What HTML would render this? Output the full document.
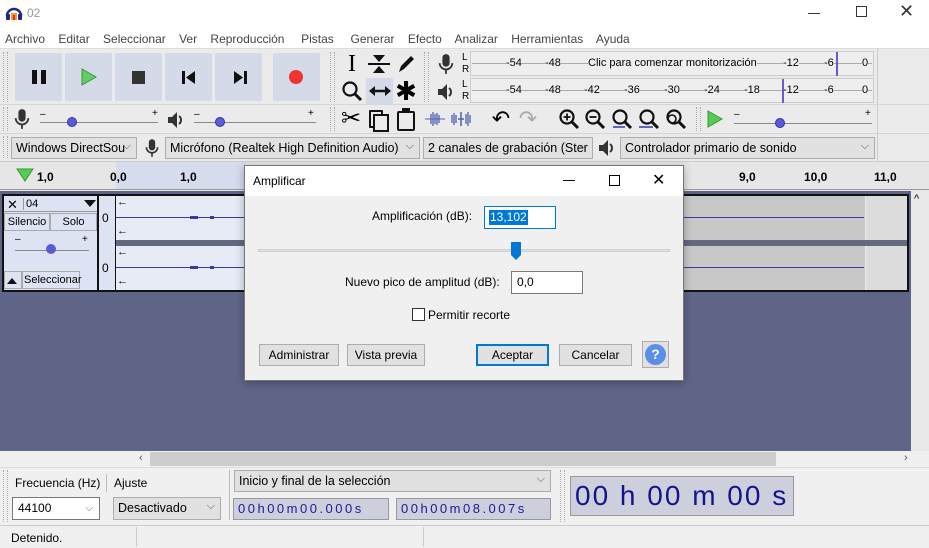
<!DOCTYPE html>
<html><head><meta charset="utf-8">
<style>
*{box-sizing:border-box;margin:0;padding:0}
body{width:929px;height:548px;overflow:hidden;position:relative;background:#f0f0f0;font-family:"Liberation Sans",sans-serif;font-size:12px;color:#000}
.a{position:absolute}
.btn{position:absolute;background:#d5dae8;border-radius:2px;top:53px;width:47px;height:48px}
.tool{position:absolute;width:26px;height:26px;font-size:20px;text-align:center;line-height:26px}
.dd{position:absolute;background:#e1e1e1;border:1px solid #adadad;height:22px;line-height:20px;padding-left:4px;font-size:12.5px;white-space:nowrap;overflow:hidden}
.dd:after{content:"⌵";position:absolute;right:5px;top:-2px;color:#555;font-size:11px}
.grip{position:absolute;width:5px;border-left:1px dotted #aaa;border-right:1px dotted #aaa}
.mt{position:absolute;font-size:11px}
.dbtn{position:absolute;top:344px;height:22px;background:#e1e1e1;border:1px solid #adadad;text-align:center;line-height:20px;font-size:12px}
.tc{color:#1a1a9a;font-family:"Liberation Sans Narrow","Liberation Sans",sans-serif}
</style></head><body>
<svg width="0" height="0" style="position:absolute"><defs>
<symbol id="mic" viewBox="0 0 20 24"><rect x="6" y="1" width="8" height="14" rx="4" fill="#333"/><path d="M3 11 a7 7 0 0 0 14 0" fill="none" stroke="#333" stroke-width="2"/><rect x="9" y="18" width="2" height="5" fill="#333"/></symbol>
<symbol id="spk" viewBox="0 0 20 20"><path d="M2 7 H6 L11 2 V18 L6 13 H2Z" fill="#333"/><path d="M13 6 a5 5 0 0 1 0 8" fill="none" stroke="#333" stroke-width="2"/></symbol>
<symbol id="mag" viewBox="0 0 22 22"><circle cx="9" cy="9" r="6.5" fill="none" stroke="#111" stroke-width="2.2"/><path d="M14 14 L20 20" stroke="#111" stroke-width="3"/></symbol>
</defs></svg>
<!-- title bar -->
<div class="a" style="left:0;top:0;width:929px;height:28px;background:#fff"></div>
<svg class="a" style="left:5px;top:5px" width="18" height="16"><path d="M2 11 A7 7 0 0 1 16 11" fill="none" stroke="#1a2a8a" stroke-width="2.5"/><rect x="1" y="9" width="4" height="6" rx="1" fill="#1a2a8a"/><rect x="13" y="9" width="4" height="6" rx="1" fill="#1a2a8a"/><rect x="6" y="8" width="6" height="7" fill="#f0a020"/><rect x="8" y="10" width="2" height="5" fill="#e03020"/></svg>
<div class="a" style="left:27px;top:6px;color:#999;font-size:12px">02</div>
<div class="a" style="left:808px;top:13px;width:12px;border-top:1px solid #333"></div>
<div class="a" style="left:856px;top:6px;width:11px;height:11px;border:1px solid #333"></div>
<div class="a" style="left:899px;top:1px;font-size:18px;color:#333">✕</div>
<!-- menu -->
<div class="a" style="left:0;top:28px;width:929px;height:20px;background:#fff"></div>
<div class="a" style="left:5px;top:32px;color:#444;font-size:12px">Archivo&nbsp;&nbsp;&nbsp; Editar&nbsp;&nbsp;&nbsp; Seleccionar&nbsp;&nbsp;&nbsp; Ver&nbsp;&nbsp;&nbsp; Reproducción&nbsp;&nbsp;&nbsp;&nbsp; Pistas&nbsp;&nbsp;&nbsp;&nbsp; Generar&nbsp;&nbsp;&nbsp; Efecto&nbsp;&nbsp;&nbsp; Analizar&nbsp;&nbsp;&nbsp; Herramientas&nbsp;&nbsp;&nbsp; Ayuda</div>
<!-- toolbar area -->
<div class="a" style="left:0;top:48px;width:929px;height:113px;background:#ebebeb;border-top:1px solid #ddd"></div>
<div class="grip" style="left:3px;top:52px;height:50px"></div>
<div class="btn" style="left:15px"></div><div class="btn" style="left:65px"></div><div class="btn" style="left:115px"></div><div class="btn" style="left:165px"></div><div class="btn" style="left:215px"></div><div class="btn" style="left:273px"></div>
<div class="a" style="left:32px;top:70px;width:5px;height:14px;background:#111"></div><div class="a" style="left:41px;top:70px;width:5px;height:14px;background:#111"></div>
<svg class="a" style="left:80px;top:68px" width="18" height="18"><path d="M2 1 L16 9 L2 17Z" fill="#6c6" stroke="#393" stroke-width="1"/></svg>
<div class="a" style="left:132px;top:71px;width:13px;height:13px;background:#333"></div>
<svg class="a" style="left:181px;top:70px" width="16" height="15"><rect x="1" y="1" width="3" height="13" fill="#111"/><path d="M14 1 L5 7.5 L14 14Z" fill="#111"/></svg>
<svg class="a" style="left:232px;top:70px" width="16" height="15"><rect x="12" y="1" width="3" height="13" fill="#111"/><path d="M2 1 L11 7.5 L2 14Z" fill="#111"/></svg>
<div class="a" style="left:289px;top:70px;width:14px;height:14px;border-radius:50%;background:#e33"></div>
<div class="grip" style="left:330px;top:52px;height:50px"></div>
<div class="tool" style="left:339px;top:51px;font-family:'Liberation Serif';font-size:24px">I</div>
<svg class="a" style="left:367px;top:53px" width="24" height="22"><path d="M1 11 H23" stroke="#111" stroke-width="2"/><path d="M6 2 H18 L12 9Z M6 20 H18 L12 13Z" fill="#111"/></svg>
<svg class="a" style="left:396px;top:53px" width="20" height="22"><path d="M3 19 L5 13 L15 3 L18 6 L8 16Z" fill="#111"/></svg>
<svg class="a" style="left:341px;top:80px" width="22" height="22"><use href="#mag"/></svg>
<div class="a" style="left:366px;top:78px;width:27px;height:26px;background:#d5dae8"></div>
<svg class="a" style="left:368px;top:84px" width="24" height="14"><path d="M5 7 H19" stroke="#111" stroke-width="2.5"/><path d="M1 7 L7 2 V12Z M23 7 L17 2 V12Z" fill="#111"/></svg>
<div class="tool" style="left:393px;top:78px;font-size:26px">✱</div>
<div class="grip" style="left:424px;top:52px;height:50px"></div>
<svg class="a" style="left:437px;top:53px" width="18" height="22"><use href="#mic"/></svg>
<svg class="a" style="left:436px;top:82px" width="20" height="20"><use href="#spk"/></svg>
<!-- meters -->
<div class="a" style="left:462px;top:52px;font-size:10px;line-height:12px">L<br>R</div>
<div class="a" style="left:462px;top:79px;font-size:10px;line-height:12px">L<br>R</div>
<div class="a" style="left:470px;top:51px;width:404px;height:25px;border:1px solid #ccc;background:#eee"></div>
<div class="a" style="left:470px;top:78px;width:404px;height:25px;border:1px solid #ccc;background:#eee"></div>
<div class="a" style="left:472px;top:63px;width:400px;border-top:1px solid #aaa"></div>
<div class="a" style="left:472px;top:90px;width:400px;border-top:1px solid #aaa"></div>
<div class="mt" style="left:506px;top:57px;background:#eee">-54</div><div class="mt" style="left:545px;top:57px;background:#eee">-48</div>
<div class="mt" style="left:588px;top:57px;background:#eee">Clic para comenzar monitorización</div>
<div class="mt" style="left:783px;top:57px;background:#eee">-12</div><div class="mt" style="left:824px;top:57px;background:#eee">-6</div><div class="mt" style="left:862px;top:57px;background:#eee">0</div>
<div class="mt" style="left:506px;top:84px;background:#eee">-54</div><div class="mt" style="left:545px;top:84px;background:#eee">-48</div><div class="mt" style="left:584px;top:84px;background:#eee">-42</div><div class="mt" style="left:624px;top:84px;background:#eee">-36</div><div class="mt" style="left:664px;top:84px;background:#eee">-30</div><div class="mt" style="left:704px;top:84px;background:#eee">-24</div><div class="mt" style="left:744px;top:84px;background:#eee">-18</div><div class="mt" style="left:783px;top:84px;background:#eee">-12</div><div class="mt" style="left:824px;top:84px;background:#eee">-6</div><div class="mt" style="left:862px;top:84px;background:#eee">0</div>
<div class="a" style="left:836px;top:52px;width:2px;height:24px;background:#6a5acd"></div>
<div class="a" style="left:782px;top:79px;width:2px;height:24px;background:#6a5acd"></div>
<div class="a" style="left:877px;top:48px;width:1px;height:113px;background:#ccc"></div>
<!-- row 3 -->
<div class="a" style="left:0;top:104px;width:929px;border-top:1px solid #d6d6d6"></div>
<div class="grip" style="left:3px;top:107px;height:24px"></div>
<svg class="a" style="left:13px;top:108px" width="18" height="22"><use href="#mic"/></svg>
<div class="a" style="left:40px;top:109px;font-size:10px">–</div><div class="a" style="left:152px;top:108px;font-size:10px">+</div>
<div class="a" style="left:40px;top:122px;width:118px;border-top:1px solid #888"></div>
<div class="a" style="left:67px;top:117px;width:10px;height:10px;border-radius:50%;background:#5b5bd6;border:1px solid #33a"></div>
<svg class="a" style="left:166px;top:110px" width="20" height="20"><use href="#spk"/></svg>
<div class="a" style="left:194px;top:109px;font-size:10px">–</div><div class="a" style="left:308px;top:108px;font-size:10px">+</div>
<div class="a" style="left:194px;top:122px;width:122px;border-top:1px solid #888"></div>
<div class="a" style="left:215px;top:117px;width:10px;height:10px;border-radius:50%;background:#5b5bd6;border:1px solid #33a"></div>
<div class="grip" style="left:330px;top:107px;height:24px"></div>
<div class="tool" style="left:338px;top:106px;font-size:24px">✂</div>
<div class="a" style="left:369px;top:110px;width:14px;height:18px;border:2.5px solid #111;border-radius:1px"></div><div class="a" style="left:373px;top:114px;width:16px;height:18px;border:2.5px solid #111;background:#ebebeb"></div>
<div class="a" style="left:397px;top:111px;width:18px;height:20px;border:2.5px solid #111;border-radius:2px"></div><div class="a" style="left:402px;top:108px;width:8px;height:5px;background:#111"></div>
<svg class="a" style="left:424px;top:110px" width="22" height="18"><path d="M1 9 H21" stroke="#5060b0"/><path d="M7 4 V14 M9 2 V16 M11 4 V14 M13 3 V15 M15 5 V13" stroke="#5060b0" stroke-width="1.3"/></svg>
<svg class="a" style="left:450px;top:110px" width="22" height="18"><path d="M2 5 V13 M4 3 V15 M6 5 V13 M16 4 V14 M18 2 V16 M20 5 V13" stroke="#5060b0" stroke-width="1.3"/><path d="M11 2 V16 M8 9 H14" stroke="#5060b0" stroke-width="1.5"/></svg>
<div class="tool" style="left:488px;top:106px;font-size:22px">↶</div>
<div class="tool" style="left:515px;top:106px;font-size:22px;color:#aaa">↷</div>
<svg class="a" style="left:558px;top:108px" width="22" height="22"><use href="#mag"/><path d="M5.5 9 H12.5 M9 5.5 V12.5" stroke="#111" stroke-width="1.8"/></svg>
<svg class="a" style="left:584px;top:108px" width="22" height="22"><use href="#mag"/><path d="M5.5 9 H12.5" stroke="#111" stroke-width="1.8"/></svg>
<svg class="a" style="left:611px;top:108px" width="22" height="22"><use href="#mag"/><path d="M2 19 H14" stroke="#2a3ab0" stroke-width="1.5"/></svg>
<svg class="a" style="left:638px;top:108px" width="22" height="22"><use href="#mag"/><path d="M1 19 H15" stroke="#2a3ab0" stroke-width="1.5"/></svg>
<svg class="a" style="left:665px;top:108px" width="22" height="22"><use href="#mag"/><circle cx="7" cy="11" r="4" fill="none" stroke="#111" stroke-width="1.6"/></svg>
<div class="grip" style="left:696px;top:107px;height:24px"></div>
<svg class="a" style="left:706px;top:110px" width="18" height="18"><path d="M2 1 L16 9 L2 17Z" fill="#5c5" stroke="#393"/></svg>
<div class="a" style="left:734px;top:109px;font-size:10px">–</div><div class="a" style="left:865px;top:108px;font-size:10px">+</div>
<div class="a" style="left:734px;top:123px;width:138px;border-top:1px solid #888"></div>
<div class="a" style="left:775px;top:118px;width:10px;height:10px;border-radius:50%;background:#5b5bd6;border:1px solid #33a"></div>
<!-- row 4 -->
<div class="a" style="left:0;top:133px;width:929px;border-top:1px solid #d6d6d6"></div>
<div class="grip" style="left:3px;top:136px;height:22px"></div>
<div class="dd" style="left:11px;top:137px;width:126px">Windows DirectSou</div>
<svg class="a" style="left:144px;top:137px" width="16" height="22"><use href="#mic"/></svg>
<div class="dd" style="left:165px;top:137px;width:255px">Micrófono (Realtek High Definition Audio)</div>
<div class="dd" style="left:423px;top:137px;width:170px">2 canales de grabación (Ster</div>
<svg class="a" style="left:597px;top:138px" width="20" height="20"><use href="#spk"/></svg>
<div class="dd" style="left:620px;top:137px;width:255px">Controlador primario de sonido</div>
<!-- ruler -->
<div class="a" style="left:0;top:161px;width:929px;height:30px;background:#e6e6e6;border-top:1px solid #ccc"></div>
<div class="a" style="left:116px;top:162px;width:130px;height:28px;background:#d4dced"></div>
<svg class="a" style="left:15px;top:167px" width="20" height="16"><path d="M2 2 L18 2 L10 14Z" fill="#5c5" stroke="#393"/></svg>
<div class="a" style="left:37px;top:170px;font-weight:bold;font-size:12px">1,0</div>
<div class="a" style="left:110px;top:170px;font-weight:bold;font-size:12px">0,0</div>
<div class="a" style="left:180px;top:170px;font-weight:bold;font-size:12px">1,0</div>
<div class="a" style="left:739px;top:170px;font-weight:bold;font-size:12px">9,0</div>
<div class="a" style="left:804px;top:170px;font-weight:bold;font-size:12px">10,0</div>
<div class="a" style="left:874px;top:170px;font-weight:bold;font-size:12px">11,0</div>
<div class="a" style="left:0;top:189px;width:929px;border-top:1px solid #999"></div>
<!-- tracks area -->
<div class="a" style="left:0;top:191px;width:911px;height:260px;background:#5f6587"></div>
<div class="a" style="left:911px;top:191px;width:18px;height:260px;background:#e8e8e8"></div>
<div class="a" style="left:914px;top:193px;font-size:11px">^</div>
<div class="a" style="left:2px;top:194px;width:907px;height:98px;background:#111"></div>
<div class="a" style="left:4px;top:196px;width:93px;height:94px;background:#dde3f3"></div>
<div class="a" style="left:4px;top:196px;width:93px;height:16px;border-bottom:1px solid #999"></div>
<div class="a" style="left:7px;top:197px;font-size:13px">✕</div>
<div class="a" style="left:23px;top:198px;font-size:11px;border-left:1px solid #999;padding-left:2px">04</div>
<div class="a" style="left:84px;top:200px;border:6px solid transparent;border-top:7px solid #111"></div>
<div class="a" style="left:4px;top:213px;width:46px;height:18px;border:1px solid #aaa;font-size:11px;line-height:16px;text-align:center">Silencio</div>
<div class="a" style="left:50px;top:213px;width:47px;height:18px;border:1px solid #aaa;font-size:11px;line-height:16px;text-align:center">Solo</div>
<div class="a" style="left:15px;top:234px;font-size:10px">–</div><div class="a" style="left:82px;top:234px;font-size:10px">+</div>
<div class="a" style="left:15px;top:250px;width:74px;border-top:1px solid #888"></div>
<div class="a" style="left:46px;top:244px;width:10px;height:10px;border-radius:50%;background:#5b5bd6"></div>
<div class="a" style="left:4px;top:271px;width:18px;height:18px;border:1px solid #aaa"></div>
<div class="a" style="left:7px;top:278px;border:5px solid transparent;border-bottom:6px solid #111;border-top:0"></div>
<div class="a" style="left:22px;top:271px;width:58px;height:18px;border:1px solid #aaa;font-size:11px;line-height:16px;padding-left:1px">Seleccionar</div>
<div class="a" style="left:99px;top:196px;width:16px;height:94px;background:#dde3f3"></div>
<div class="a" style="left:102px;top:211px;font-size:12px">0</div><div class="a" style="left:102px;top:261px;font-size:12px">0</div>
<div class="a" style="left:116px;top:196px;width:750px;height:44px;background:#e6ebf6"></div>
<div class="a" style="left:116px;top:246px;width:750px;height:44px;background:#e6ebf6"></div>
<div class="a" style="left:684px;top:196px;width:181px;height:44px;background:#c8c8c8"></div>
<div class="a" style="left:684px;top:246px;width:181px;height:44px;background:#c8c8c8"></div>
<div class="a" style="left:866px;top:196px;width:41px;height:44px;background:#dcdcdc"></div>
<div class="a" style="left:866px;top:246px;width:41px;height:44px;background:#dcdcdc"></div>
<div class="a" style="left:116px;top:240px;width:791px;height:6px;background:#63697f"></div>
<div class="a" style="left:116px;top:217px;width:748px;border-top:1px solid #3a3aa0"></div>
<div class="a" style="left:116px;top:267px;width:748px;border-top:1px solid #3a3aa0"></div>
<div class="a" style="left:117px;top:196px;font-size:11px">←</div><div class="a" style="left:117px;top:225px;font-size:11px">←</div>
<div class="a" style="left:117px;top:246px;font-size:11px">←</div><div class="a" style="left:117px;top:275px;font-size:11px">←</div>
<div class="a" style="left:190px;top:216px;width:8px;height:3px;background:#3a3aa0"></div><div class="a" style="left:210px;top:216px;width:4px;height:3px;background:#3a3aa0"></div>
<div class="a" style="left:190px;top:266px;width:8px;height:3px;background:#3a3aa0"></div><div class="a" style="left:210px;top:266px;width:4px;height:3px;background:#3a3aa0"></div>
<!-- h scroll -->
<div class="a" style="left:0;top:451px;width:929px;height:16px;background:#f0f0f0"></div>
<div class="a" style="left:150px;top:452px;width:626px;height:14px;background:#cdcdcd"></div>
<div class="a" style="left:139px;top:452px;font-size:11px;color:#555">‹</div><div class="a" style="left:904px;top:452px;font-size:11px;color:#555">›</div>
<!-- bottom toolbar -->
<div class="a" style="left:0;top:467px;width:929px;height:58px;background:#f0f0f0;border-top:1px solid #ddd"></div>
<div class="grip" style="left:3px;top:470px;height:52px"></div>
<div class="a tc" style="left:15px;top:476px;font-size:12px;color:#000">Frecuencia (Hz)</div>
<div class="a" style="left:106px;top:474px;height:18px;border-left:1px solid #bbb"></div>
<div class="a tc" style="left:114px;top:476px;font-size:12px;color:#000">Ajuste</div>
<div class="a" style="left:12px;top:497px;width:88px;height:23px;background:#fff;border:1px solid #777;font-size:12px;line-height:21px;padding-left:5px">44100<span style="position:absolute;right:6px;color:#666;font-size:10px">⌵</span></div>
<div class="dd" style="left:113px;top:497px;width:108px;height:23px">Desactivado</div>
<div class="a" style="left:229px;top:470px;height:50px;border-left:1px solid #bbb"></div>
<div class="dd" style="left:234px;top:470px;width:317px;height:22px">Inicio y final de la selección</div>
<div class="a tc" style="left:233px;top:498px;width:156px;height:22px;background:#cdd0dc;border:1px solid #999;font-size:13px;line-height:20px;letter-spacing:2.5px;padding-left:4px">00h00m00.000s</div>
<div class="a tc" style="left:396px;top:498px;width:155px;height:22px;background:#cdd0dc;border:1px solid #999;font-size:13px;line-height:20px;letter-spacing:2.5px;padding-left:4px">00h00m08.007s</div>
<div class="grip" style="left:560px;top:470px;height:52px"></div>
<div class="a tc" style="left:570px;top:476px;width:224px;height:40px;background:#cdd0dc;border:1px solid #999;font-size:28px;line-height:38px;letter-spacing:2px;padding-left:4px;color:#14148a">00 h 00 m 00 s</div>
<!-- status -->
<div class="a" style="left:0;top:525px;width:929px;height:23px;background:#f0f0f0;border-top:1px solid #ccc"></div>
<div class="a" style="left:11px;top:531px;font-size:12px">Detenido.</div>
<div class="a" style="left:136px;top:527px;height:20px;border-left:1px solid #ccc"></div>
<div class="a" style="left:423px;top:527px;height:20px;border-left:1px solid #ccc"></div>
<!-- dialog -->
<div class="a" style="left:244px;top:165px;width:440px;height:216px;background:#f0f0f0;border:1px solid #777;box-shadow:0 2px 8px rgba(0,0,0,.3)"></div>
<div class="a" style="left:245px;top:166px;width:438px;height:30px;background:#fff"></div>
<div class="a" style="left:253px;top:174px;font-size:12px">Amplificar</div>
<div class="a" style="left:563px;top:180px;width:12px;border-top:1px solid #000"></div>
<div class="a" style="left:609px;top:175px;width:11px;height:11px;border:1px solid #000"></div>
<div class="a" style="left:652px;top:170px;font-size:16px">✕</div>
<div class="a" style="left:372px;top:209px;font-size:12px">Amplificación (dB):</div>
<div class="a" style="left:484px;top:206px;width:72px;height:23px;background:#fff;border:1px solid #0078d7"></div>
<div class="a" style="left:489px;top:210px;height:15px;background:#0078d7;color:#fff;font-size:12px;line-height:15px;padding:0 1px">13,102</div>
<div class="a" style="left:258px;top:249px;width:412px;height:3px;background:#e0e0e0;border:1px solid #d0d0d0"></div>
<svg class="a" style="left:510px;top:241px" width="12" height="20"><path d="M1 1 H11 V14 L6 19 L1 14Z" fill="#0078d7"/></svg>
<div class="a" style="left:345px;top:275px;font-size:12px">Nuevo pico de amplitud (dB):</div>
<div class="a" style="left:511px;top:271px;width:72px;height:23px;background:#fff;border:1px solid #7a7a7a;font-size:12px;line-height:21px;padding-left:5px">0,0</div>
<div class="a" style="left:412px;top:308px;width:13px;height:13px;background:#fff;border:1px solid #333"></div>
<div class="a" style="left:428px;top:308px;font-size:12px">Permitir recorte</div>
<div class="dbtn" style="left:259px;width:80px">Administrar</div>
<div class="dbtn" style="left:347px;width:78px">Vista previa</div>
<div class="dbtn" style="left:476px;width:73px;border:2px solid #0078d7;line-height:18px">Aceptar</div>
<div class="dbtn" style="left:559px;width:73px">Cancelar</div>
<div class="a" style="left:642px;top:341px;width:27px;height:27px;background:#e1e1e1;border:1px solid #adadad"></div>
<div class="a" style="left:645px;top:344px;width:21px;height:21px;border-radius:50%;background:#5b8ee6;color:#fff;font-weight:bold;font-size:14px;line-height:21px;text-align:center">?</div>
</body></html>
